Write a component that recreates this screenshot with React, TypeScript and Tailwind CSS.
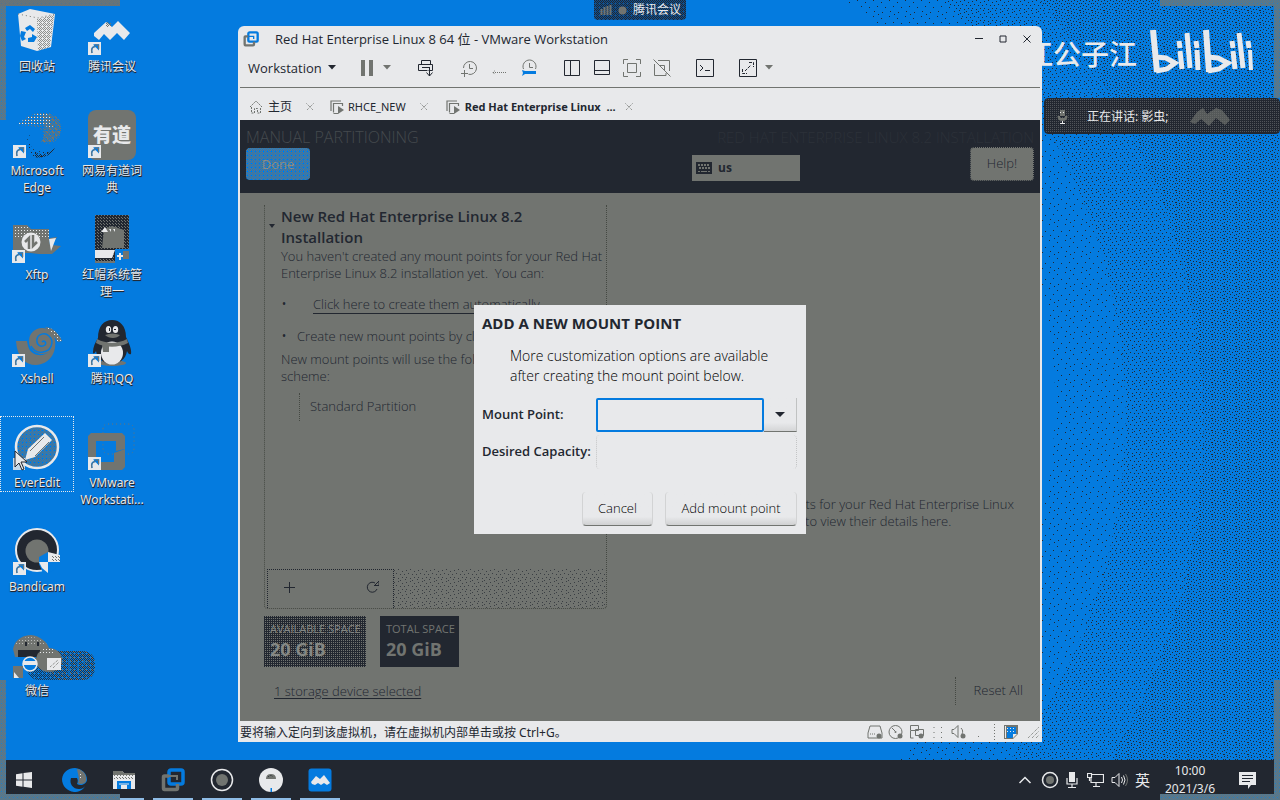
import React from "react";

const DARK = "#222730";
const GRAY = "#717470";
const LIGHT = "#e8e9eb";
const BLUE = "#047bdf";

type SvgProps = { w: number; h: number; children: React.ReactNode; className?: string };

function Svg({ w, h, children, className }: SvgProps) {
  return (
    <svg width={w} height={h} viewBox={`0 0 ${w} ${h}`} fill="none" className={className} aria-hidden="true">
      {children}
    </svg>
  );
}

/* ---------- Dither patterns shared by every drawing ---------- */

function Patterns() {
  return (
    <svg width="0" height="0" className="absolute" aria-hidden="true">
      <defs>
        <pattern id="sparse" width="16" height="16" patternUnits="userSpaceOnUse" shapeRendering="crispEdges">
          <path d="M1 2h1v1h-1zM9 0h1v1h-1zM5 7h1v1h-1zM13 6h1v1h-1zM2 12h1v1h-1zM10 11h1v1h-1zM14 14h1v1h-1z" fill={DARK} />
        </pattern>
        <pattern id="medium" width="12" height="12" patternUnits="userSpaceOnUse" shapeRendering="crispEdges">
          <path d="M0 1h1v1h-1zM4 0h1v1h-1zM8 2h1v1h-1zM2 4h1v1h-1zM6 5h1v1h-1zM10 5h1v1h-1zM0 8h1v1h-1zM4 9h1v1h-1zM8 8h1v1h-1zM11 10h1v1h-1zM6 11h1v1h-1z" fill={DARK} />
        </pattern>
        <pattern id="dense" width="12" height="12" patternUnits="userSpaceOnUse" shapeRendering="crispEdges">
          <path d="M0 0h1v1h-1zM3 1h1v1h-1zM6 0h1v1h-1zM9 1h1v1h-1zM1 3h1v1h-1zM5 3h1v1h-1zM8 4h1v1h-1zM11 3h1v1h-1zM3 5h1v1h-1zM0 6h1v1h-1zM6 6h1v1h-1zM10 7h1v1h-1zM2 8h1v1h-1zM5 9h1v1h-1zM8 9h1v1h-1zM11 10h1v1h-1zM0 10h1v1h-1zM3 11h1v1h-1z" fill={DARK} />
        </pattern>
        <pattern id="checkGray" width="4" height="4" patternUnits="userSpaceOnUse" shapeRendering="crispEdges">
          <path d="M0 0h1v1h-1zM2 0h1v1h-1zM1 1h1v1h-1zM3 1h1v1h-1zM0 2h1v1h-1zM2 2h1v1h-1zM3 3h1v1h-1z" fill={GRAY} />
        </pattern>
        <pattern id="checkDark" width="4" height="4" patternUnits="userSpaceOnUse" shapeRendering="crispEdges">
          <path d="M0 0h1v1h-1zM2 0h1v1h-1zM1 1h1v1h-1zM3 1h1v1h-1zM0 2h1v1h-1zM2 2h1v1h-1zM3 3h1v1h-1z" fill={DARK} />
        </pattern>
        <pattern id="dotsLight" width="3" height="3" patternUnits="userSpaceOnUse" shapeRendering="crispEdges">
          <path d="M0 0h1v1h-1z" fill={LIGHT} />
        </pattern>
        <pattern id="dotsGray" width="3" height="3" patternUnits="userSpaceOnUse" shapeRendering="crispEdges">
          <path d="M1 0h1v1h-1zM0 2h1v1h-1z" fill={GRAY} />
        </pattern>
      </defs>
    </svg>
  );
}

/* Fills its positioned parent with one of the patterns. */
function Dither({ id }: { id: string }) {
  return (
    <svg className="absolute inset-0 h-full w-full" aria-hidden="true">
      <rect width="100%" height="100%" fill={`url(#${id})`} />
    </svg>
  );
}

function Wallpaper() {
  return (
    <svg className="absolute inset-0 h-full w-full" viewBox="0 0 1280 760" preserveAspectRatio="xMaxYMin slice" aria-hidden="true">
      <path d="M845 0A490 490 0 0 1 900 760H1010A570 570 0 0 0 945 0Z" fill="url(#sparse)" />
      <path d="M945 0A570 570 0 0 1 1010 760H1110A640 640 0 0 0 1040 0Z" fill="url(#medium)" />
      <path d="M1040 0A640 640 0 0 1 1110 760H1280V0Z" fill="url(#dense)" />
    </svg>
  );
}

/* ---------- Desktop icons ---------- */

function ShortcutArrow({ y = 34 }: { y?: number }) {
  return (
    <g transform={`translate(0 ${y})`}>
      <rect width="13" height="13" fill={LIGHT} />
      <path d="M4 11c-1-4 0-6 3-6.500V3h3.500v4" stroke={BLUE} strokeWidth="1.500" />
      <path d="M5 2.500h6v6z" fill={BLUE} />
      <path d="M4 11c-1-3 0-6 3-6.500M7 3h3.500v4" stroke={GRAY} />
    </g>
  );
}

const recycle = (
  <Svg w={48} h={48}>
    <path d="M5 7L17 2l25 5-4 33-14 4-16-5z" fill={LIGHT} />
    <path d="M24 12l17-4-4 32-12 4z" fill="url(#checkGray)" opacity=".75" />
    <path d="M5 7l20 4 17-4" stroke={GRAY} strokeDasharray="1 3" />
    <path d="M12 21l5-3 5 4-2 3-3-3-3 2zM8 24l5 1-2 5 2 2-4 2-2-5zM15 31l4-1v-3l5 3-3 5h-6z" fill={BLUE} />
  </Svg>
);

const meeting = (
  <Svg w={48} h={48}>
    <path d="M6 23L18 12l6 5 6-6 12 12-6 7-7-7-7 7-6-6-5 6-5-4z" fill={LIGHT} transform="translate(0 3)" />
    <path d="M18 15h5v5h-5z" fill="url(#checkGray)" />
    <ShortcutArrow y={35} />
  </Svg>
);

const edge = (
  <Svg w={48} h={48}>
    <path d="M4 14C14 3 28-1 39 3c10 5 13 14 7 23-5 7-14 9-18 4 6-7 1-15-12-15z" fill="url(#dotsGray)" />
    <path d="M28 3c14-1 21 6 20 17-3 10-14 14-20 10 5-6 5-15 0-27z" fill="url(#checkGray)" />
    <path d="M4 14C16 3 28 1 36 3l4 14-9-2-15-1z" fill="url(#dotsLight)" />
    <path d="M17 22c-3 10 2 20 12 18 5 0 10-1 13-4-3 8-12 12-20 10-8-4-11-14-5-24z" fill="url(#medium)" />
    <path d="M22 41c7 4 13 2 20-4-3 7-12 11-20 9z" fill="url(#checkDark)" />
    <ShortcutArrow y={34} />
  </Svg>
);

const youdao = (
  <span className="relative -mt-px grid h-[50px] w-12 place-items-center rounded-lg bg-[#717470]">
    <span className="text-[19px] leading-5 font-black text-[#e8e9eb]">有道</span>
    <Svg w={48} h={48} className="absolute inset-0">
      <ShortcutArrow y={35} />
    </Svg>
  </span>
);

const xftp = (
  <Svg w={50} h={50}>
    <path d="M1 10h14l4 4h18v24H1z" fill={GRAY} />
    <path d="M1 10h14l4 4h18v8H1z" fill="url(#dotsLight)" />
    <path d="M38 23l7-1-5 8 9 1-9 8H18l18-2z" fill={GRAY} />
    <path d="M37 24l7-1-5 13z" fill={LIGHT} />
    <circle cx="19" cy="27" r="9.500" fill={LIGHT} />
    <path d="M17 34V23l-4 4M21 20v11l4-4" stroke={GRAY} strokeWidth="2.500" />
    <ShortcutArrow y={35} />
  </Svg>
);

const archive = (
  <Svg w={48} h={52}>
    <path d="M7 0h34v48H7z" fill={DARK} />
    <path d="M7 0h34v48H7z" fill="url(#dotsGray)" />
    <path d="M16 14l8-3 12 4v18H14z" fill={GRAY} />
    <path d="M13 17l4-5 3 5zM21 14h2v3zM25 14h2v3z" fill={LIGHT} />
    <path d="M7 35h20l-3 8H7z" fill={LIGHT} />
    <path d="M7 46h20v2H7z" fill={GRAY} />
    <path d="M27 34h14v14H27z" fill={BLUE} />
    <path d="M35 36h6v8h-6z" fill={GRAY} />
    <path d="M32 38v7M29 41h6" stroke={LIGHT} strokeWidth="2" />
  </Svg>
);

const xshell = (
  <Svg w={50} h={50}>
    <path d="M4 22h11c1 8 4 13 11 14 8 1 14-4 14-10l3-6c2 15-6 25-19 26C13 46 5 38 4 22z" fill={GRAY} />
    <circle cx="30" cy="22" r="13" fill={GRAY} />
    <path d="M30 23c2-2 5 0 3 3-4 3-9 0-8-6 1-5 8-7 12-3 6 6 2 15-6 16-6 1-10-2-12-6" stroke={BLUE} strokeWidth="1.500" />
    <path d="M33 8c8 1 13 5 17 14l-4 1-4-6z" fill={GRAY} />
    <path d="M33 8c8 1 13 5 17 14l-4 1-4-6z" fill="url(#dotsLight)" />
    <ShortcutArrow y={35} />
  </Svg>
);

const qq = (
  <Svg w={48} h={48}>
    <ellipse cx="24" cy="44" rx="14" ry="3" fill={GRAY} />
    <path d="M10 19C10 7 16 1 24 1s14 6 14 17c3 6 6 13 5 17-2 1-3-1-4-3-1 8-8 13-15 13S9 40 8 32c-1 2-3 4-3 1 0-5 2-9 5-14z" fill={DARK} />
    <ellipse cx="24" cy="34" rx="11" ry="11.500" fill={LIGHT} />
    <ellipse cx="20.500" cy="10.500" rx="2.700" ry="3.600" fill={LIGHT} />
    <ellipse cx="27.500" cy="10.500" rx="2.700" ry="3.600" fill={LIGHT} />
    <path d="M21 9h1v3h-1zM26 10h2v1h-2z" fill={DARK} />
    <path d="M17 16c5-2 10-2 15 0-3 4-11 4-15 0z" fill={GRAY} />
    <path d="M9 20c9 5 21 5 30 0l1 4c-10 5-22 5-32 0z" fill={GRAY} />
    <path d="M14 25h7v8h-6z" fill={GRAY} />
    <ShortcutArrow y={35} />
  </Svg>
);

const everedit = (
  <Svg w={48} h={48}>
    <circle cx="24" cy="24" r="21" fill={BLUE} />
    <circle cx="24" cy="24" r="21" fill="url(#checkGray)" stroke={LIGHT} strokeWidth="2.500" />
    <path d="M12 37l3-11 17-16 7 7-17 17z" fill={LIGHT} />
    <path d="M17 28l14-14M22 33l14-14" stroke={GRAY} />
    <path d="M0 35h12v12H0z" fill={LIGHT} opacity=".85" />
  </Svg>
);

const vmware = (
  <Svg w={48} h={48}>
    <path d="M15 6q0-5 5-5h20q6 0 6 6v18q0 6-6 6H21q-6 0-6-6z" stroke={GRAY} strokeDasharray="1 3" />
    <path fillRule="evenodd" d="M3 10h31l3 3v13l-9 2V18H8v21h18v-9l11-4v18l-3 3H0V13z" fill={GRAY} />
    <ShortcutArrow y={34} />
  </Svg>
);

const bandicam = (
  <Svg w={48} h={48}>
    <circle cx="24" cy="23" r="21" fill={DARK} stroke={LIGHT} strokeWidth="2" />
    <circle cx="24" cy="24" r="11.500" fill={GRAY} />
    <path d="M26 30l9-5v21h-5l-4-9z" fill={BLUE} />
    <path d="M35 25l12 3v7H35zM26 35h9v11l-6-5z" fill={LIGHT} />
    <path d="M35 35h11c-1 5-6 9-11 11z" fill={BLUE} />
    <path d="M38 28h9v6h-9z" fill="url(#dotsGray)" />
    <ShortcutArrow y={35} />
  </Svg>
);

const wechat = (
  <Svg w={84} h={50}>
    <g transform="translate(0 3)">
      <rect x="34" y="17" width="48" height="29" rx="12" fill="url(#dotsGray)" />
      <rect x="14" y="17" width="68" height="29" rx="12" fill="url(#checkDark)" opacity=".85" />
      <path d="M0 15C2 4 12 1 18 1c9 1 16 7 18 13l-5 9H2z" fill={GRAY} />
      <path d="M1 10C8 1 27 0 35 12z" fill="url(#dotsLight)" opacity=".6" />
      <path d="M12 8h2v4h-2zM24 8h2v4h-2z" fill={DARK} />
      <path d="M5 16h22v7H5z" fill={DARK} />
      <ellipse cx="36" cy="26" rx="13" ry="12" fill={GRAY} />
      <path d="M29 14h12v6H26z" fill="url(#dotsLight)" />
      <circle cx="17" cy="30" r="7" fill={BLUE} stroke={LIGHT} strokeWidth="1.500" />
      <path d="M10 27h14v4H10z" fill={LIGHT} />
      <path d="M0 32h10v12H0z" fill={GRAY} />
      <path d="M34 24h14v12H34z" fill={LIGHT} />
      <path d="M37 33l8-7M40 34l6-6" stroke={GRAY} strokeDasharray="1 1" />
      <path d="M56 22v20M65 27v12M71 26v4" stroke={BLUE} />
      <path d="M1 38l5 6H1z" fill={LIGHT} />
    </g>
  </Svg>
);

type Shortcut = { label: string; art: React.ReactNode; selected?: boolean; wide?: boolean };

const shortcuts: Shortcut[] = [
  { label: "回收站", art: recycle },
  { label: "Microsoft Edge", art: edge },
  { label: "Xftp", art: xftp },
  { label: "Xshell", art: xshell },
  { label: "EverEdit", art: everedit, selected: true },
  { label: "Bandicam", art: bandicam },
  { label: "微信", art: wechat, wide: true },
  { label: "腾讯会议", art: meeting },
  { label: "网易有道词典", art: youdao },
  { label: "红帽系统管理一", art: archive },
  { label: "腾讯QQ", art: qq },
  { label: "VMware Workstati...", art: vmware },
];

function DesktopIcon({ item }: { item: Shortcut }) {
  return (
    <button
      className={
        item.selected
          ? "flex h-[76px] w-[74px] flex-col items-center pt-[7px] outline-1 -outline-offset-1 outline-dotted outline-[#e8e9eb]"
          : "flex w-[74px] flex-col items-center pt-[7px]"
      }
    >
      <span className={item.wide ? "flex h-[51px] w-12 justify-start overflow-visible" : "flex h-[51px] w-12 justify-center"}>
        <span className="shrink-0">{item.art}</span>
      </span>
      <span className="w-[66px] text-center text-[12px] leading-[17px] text-[#e8e9eb] [text-shadow:1px_1px_0_#222730,0_1px_1px_#222730]">
        {item.label}
      </span>
    </button>
  );
}

/* ---------- VMware window ---------- */

function VmLogo({ size, dark }: { size: number; dark?: boolean }) {
  return (
    <svg width={size} height={size} viewBox="0 0 24 24" fill="none" aria-hidden="true">
      <rect x="8" y="2" width="14" height="14" rx="2" stroke={BLUE} strokeWidth="3.500" />
      <path d="M8 8H3.500q-1 0-1 1v11q0 1.500 1 1.500H15q1.500 0 1.500-1.500v-4" stroke={GRAY} strokeWidth="3.500" />
      <path d="M8 8h8v4" stroke={dark ? GRAY : BLUE} strokeWidth="2" />
    </svg>
  );
}

const tool = "grid h-6 w-6 place-items-center";

function Caret({ color }: { color: string }) {
  return (
    <Svg w={8} h={5}>
      <path d="M0 0h8L4 4.500z" fill={color} />
    </Svg>
  );
}

function Toolbar() {
  return (
    <div className="flex h-[35px] items-center pb-1 pl-2.5">
      <button className="flex w-[88px] items-center justify-between text-[13px] leading-5">
        Workstation <Caret color={DARK} />
      </button>
      <div className="ml-[19px] flex items-center">
        <button className={tool} aria-label="Pause">
          <Svg w={12} h={16}><path d="M0 0h4v16H0zM8 0h4v16H8z" fill={GRAY} /></Svg>
        </button>
        <button className="grid h-6 w-4 place-items-center" aria-label="Power options"><Caret color={GRAY} /></button>
      </div>
      <button className="ml-[19px] grid h-6 w-6 place-items-center" aria-label="Send keys">
        <Svg w={18} h={18}>
          <path d="M4.500 5V1.500h9V5M1.500 5.500h14v6h-4M1.500 5.500v6h9M5 8.500h8M12.500 9v8M9.500 13.500l3 3.500 3-3.500" stroke={DARK} />
        </Svg>
      </button>
      <div className="ml-[19px] flex items-center gap-1.5">
        <button className={tool} aria-label="Take snapshot">
          <Svg w={18} h={18}>
            <path d="M3.500 9a6.500 6.500 0 1 1 5 6.300M9.500 5v4.500H13M4.500 11v7M1 14.500h7" stroke={GRAY} />
          </Svg>
        </button>
        <button className={tool} aria-label="Revert snapshot">
          <Svg w={16} h={18}>
            <path d="M2 13.500h14" stroke={GRAY} strokeDasharray="1 1" />
            <path d="M4 11.500l-2 2 2 2" stroke={GRAY} strokeDasharray="1 1" />
          </Svg>
        </button>
        <button className={tool} aria-label="Manage snapshots">
          <Svg w={18} h={18}>
            <path d="M3.500 10a6.500 6.500 0 1 1 12 0M9.500 4v4.500H13" stroke={GRAY} />
            <path d="M2 11l3 1h11v3H5l-3 2 1-3z" fill={BLUE} />
          </Svg>
        </button>
      </div>
      <div className="ml-[19px] flex items-center gap-1.5">
        <button className={tool} aria-label="Library">
          <Svg w={16} h={16}><path d="M.5.5h15v15H.5zM6.500 1v14" stroke={DARK} /></Svg>
        </button>
        <button className={tool} aria-label="Thumbnail bar">
          <Svg w={16} h={16}><path d="M.5.5h15v14H.5zM1 10.500h14" stroke={DARK} /></Svg>
        </button>
        <button className={tool} aria-label="Full screen">
          <Svg w={18} h={18}>
            <path d="M.5 5V.5H5M13 .5h4.500V5M17.500 13v4.500H13M5 17.500H.5V13M4.500 4.500h9v9h-9z" stroke={GRAY} />
          </Svg>
        </button>
        <button className={tool} aria-label="Unity">
          <Svg w={18} h={18}>
            <path d="M5 1.500h11.500V12M6.500 6.500h5V12M1.500 5v11.500H13V14M.5.500l17 17" stroke={GRAY} />
          </Svg>
        </button>
      </div>
      <button className="ml-[19px] grid h-6 w-6 place-items-center" aria-label="Console view">
        <Svg w={18} h={18}><path d="M.5.5h17v17H.5zM4 6l3 3-3 3M9 11.500h5" stroke={DARK} /></Svg>
      </button>
      <div className="ml-[19px] flex items-center gap-px">
        <button className={tool} aria-label="Stretch guest">
          <Svg w={18} h={18}>
            <path d="M.5.5h17v17H.5z" stroke={DARK} />
            <path d="M10 3.500h4.500V8M3.500 10v4.500H8M6 12l6-6" stroke={DARK} strokeDasharray="3 1" />
          </Svg>
        </button>
        <button className="grid h-6 w-4 place-items-center" aria-label="Stretch options"><Caret color={GRAY} /></button>
      </div>
    </div>
  );
}

function CloseMark() {
  return (
    <button aria-label="Close tab" className="grid h-4 w-4 place-items-center">
      <Svg w={8} h={8}><path d="M.5.5l7 7M7.500.5l-7 7" stroke={GRAY} strokeDasharray="1 1" /></Svg>
    </button>
  );
}

function VmTabIcon() {
  return (
    <Svg w={14} h={14}>
      <path d="M1 11V1h10M3.500 12.500v-9h9V6M3.500 13.500H8" stroke={GRAY} strokeWidth="1.200" />
      <path d="M8 6l6 4-6 4z" fill={GRAY} />
    </Svg>
  );
}

function Tabs() {
  return (
    <div className="flex h-[33px] items-center border-t border-[#717470] pt-1.5 pl-2.5 font-['Noto_Sans','Noto_Sans_CJK_SC',sans-serif] text-[11px] leading-4">
      <div className="flex items-center gap-1.5">
        <Svg w={12} h={14}>
          <path d="M0 7l6-6 6 6M1.500 7v6h3V8.500h3V13h3V7" stroke={GRAY} strokeDasharray="2 1" />
        </Svg>
        <span className="text-[12px]">主页</span>
        <span className="ml-1"><CloseMark /></span>
      </div>
      <div className="ml-3 flex items-center gap-1">
        <VmTabIcon />
        <span>RHCE_NEW</span>
        <span className="ml-1.5"><CloseMark /></span>
      </div>
      <div className="ml-3.5 flex items-center gap-[5px]">
        <VmTabIcon />
        <span className="font-bold whitespace-pre">Red Hat Enterprise Linux  ...</span>
        <CloseMark />
      </div>
    </div>
  );
}

function InstallerHeader() {
  return (
    <header className="flex h-[73px] shrink-0 justify-between bg-[#222730] pt-2 pr-1.5 pl-1.5">
      <div>
        <h1 className="text-[16px] leading-[18px] font-light text-[#454a4e]">MANUAL PARTITIONING</h1>
        <button className="relative mt-0.5 h-8 w-16 overflow-hidden rounded-sm bg-[#047bdf] text-[13px] leading-[30px] text-[#8a8d89]">
          <Dither id="checkGray" />
          <span className="relative">Done</span>
        </button>
      </div>
      <div className="w-[342px]">
        <p className="text-right text-[15px] leading-[18px] font-light whitespace-nowrap text-[#2c3139]">RED HAT ENTERPRISE LINUX 8.2 INSTALLATION</p>
        <div className="flex justify-between">
          <button className="mt-[9px] flex h-[26px] w-[108px] items-center gap-1.5 bg-[#717470] pl-1 text-[12px] leading-4 font-bold text-[#222730]">
            <Svg w={16} h={12}>
              <path d="M0 0h16v12H0z" fill={DARK} />
              <path d="M2 3h12M3 6h11" stroke={GRAY} strokeWidth="2" strokeDasharray="2 1" />
              <path d="M2 9.500h2M5 9.500h6M12 9.500h2" stroke={GRAY} />
            </Svg>
            us
          </button>
          <button className="mt-px h-[34px] w-16 rounded-sm border border-dotted border-[#222730] bg-[#717470] text-[13px] font-light text-[#222730]">
            Help!
          </button>
        </div>
      </div>
    </header>
  );
}

function PartitionPanel() {
  return (
    <section className="flex min-h-0 w-[343px] flex-1 flex-col rounded-b border border-t-0 border-dotted border-[#454943]">
      <div className="flex-1 pt-px pl-4">
        <h2 className="-ml-3 flex gap-1.5 text-[15px] leading-[21px] font-semibold text-[#222730]">
          <Svg w={6} h={24}><path d="M0 18h6l-3 4z" fill={DARK} /></Svg>
          <span className="w-64">New Red Hat Enterprise Linux 8.2 Installation</span>
        </h2>
        <p className="text-[13px] leading-[17px]">
          You haven't created any mount points for your Red Hat Enterprise Linux 8.2 installation yet.&nbsp; You can:
        </p>
        <ul className="mt-3.5 text-[13px] leading-[17px]">
          <li className="flex items-center">
            <span className="mr-6 w-2 text-[16px]">•</span>
            <a href="#auto" className="underline underline-offset-4">Click here to create them automatically.</a>
          </li>
          <li className="mt-[15px] flex items-center">
            <span className="mr-2 w-2 text-[16px]">•</span>
            <span className="whitespace-nowrap">Create new mount points by clicking the '+' button.</span>
          </li>
        </ul>
        <p className="mt-1.5 text-[13px] leading-[17px]">New mount points will use the following partitioning scheme:</p>
        <button className="mt-2 ml-[18px] flex h-7 items-center border-l border-dotted border-[#454943] pl-2.5 text-[13px]">
          Standard Partition
        </button>
      </div>
      <div className="flex h-[39px] items-stretch">
        <div className="ml-0.5 flex w-[127px] shrink-0 items-center justify-between border border-b-0 border-dotted border-[#222730] px-4 pb-1">
          <button aria-label="Add mount point to list">
            <Svg w={11} h={11}><path d="M5.500 0v11M0 5.500h11" stroke={DARK} /></Svg>
          </button>
          <button aria-label="Reload" className="-mr-0.5">
            <Svg w={13} h={13}>
              <path d="M9 2A5 5 0 1 0 11 8M8 5l5-5M8 4.500h5V1" stroke={DARK} />
            </Svg>
          </button>
        </div>
        <svg className="h-full min-w-0 flex-1" aria-hidden="true">
          <rect width="100%" height="100%" fill="url(#medium)" opacity=".7" />
        </svg>
      </div>
    </section>
  );
}

function MountDialog() {
  return (
    <div role="dialog" aria-labelledby="dlg-title" className="w-[332px] bg-[#e8e9eb] pt-2 pr-[9px] pb-2 pl-2 text-[#222730]">
      <h2 id="dlg-title" className="text-[15px] leading-[21px] font-bold">ADD A NEW MOUNT POINT</h2>
      <p className="mt-3 pl-7 text-[14px] leading-5 font-light text-black">
        More customization options are available after creating the mount point below.
      </p>
      <form className="mt-3" onSubmit={(e) => e.preventDefault()}>
        <div className="flex items-center">
          <label htmlFor="mount" className="w-[114px] text-[13px] font-semibold">Mount Point:</label>
          <input id="mount" className="h-[34px] min-w-0 flex-1 rounded-xs border-2 border-[#047bdf] bg-transparent px-2 text-[14px] outline-none" />
          <button type="button" aria-label="Mount point choices" className="grid h-[34px] w-[33px] place-items-center border-r border-b border-r-[#c0c2c2] border-b-[#717470] bg-linear-to-b from-[#e8e9eb] from-75% to-[#d4d5d6]">
            <svg width="10" height="5" viewBox="0 0 10 5" aria-hidden="true"><path d="M0 0h10L5 5z" fill={DARK} /></svg>
          </button>
        </div>
        <div className="mt-[3px] flex items-center">
          <label htmlFor="capacity" className="w-[114px] text-[13px] font-semibold whitespace-nowrap">Desired Capacity:</label>
          <input id="capacity" className="h-[34px] min-w-0 flex-1 rounded-sm border-x border-dotted border-[#c4c5c6] bg-transparent px-2 text-[14px] outline-none" />
        </div>
        <div className="mt-[23px] flex justify-end gap-3 text-[13px] font-light text-black">
          <button type="button" className="h-[34px] w-[71px] rounded-sm border-x border-b border-x-[#d2d3d4] border-b-[#717470] bg-linear-to-b from-[#e8e9eb] from-75% to-[#d0d1d2]">
            Cancel
          </button>
          <button type="submit" className="h-[34px] w-[132px] rounded-sm border-x border-b border-x-[#d2d3d4] border-b-[#717470] bg-linear-to-b from-[#e8e9eb] from-75% to-[#d0d1d2]">
            Add mount point
          </button>
        </div>
      </form>
    </div>
  );
}

function GuestScreen() {
  return (
    <div className="relative flex min-h-0 flex-1 flex-col bg-[#717470] text-[#222730]">
      <InstallerHeader />
      <div className="flex min-h-0 flex-1 pt-3 pr-4 pl-6 font-light">
        <div className="flex w-[343px] shrink-0 flex-col pb-[21px]">
          <PartitionPanel />
          <div className="mt-[7px] flex gap-3.5 font-normal text-[#717470]">
            <div className="h-[51px] w-[102px] bg-[conic-gradient(#717470_25%,#222730_0)] bg-[length:2px_2px] px-1.5 pt-1">
              <p className="text-[11px] leading-[18px] whitespace-nowrap text-[#858884]">AVAILABLE SPACE</p>
              <p className="text-[18px] leading-[22px] font-bold text-[#858884]">20 GiB</p>
            </div>
            <div className="h-[51px] w-[79px] bg-[#222730] px-1.5 pt-1">
              <p className="text-[11px] leading-[18px] whitespace-nowrap">TOTAL SPACE</p>
              <p className="text-[18px] leading-[22px] font-bold">20 GiB</p>
            </div>
          </div>
          <a href="#storage" className="mt-[15px] ml-2.5 self-start text-[13px] leading-[18px] text-[#222730] underline underline-offset-2">
            1 storage device selected
          </a>
        </div>
        <div className="flex min-w-0 flex-1 flex-col items-end justify-end pb-4">
          <p className="mb-[147px] w-[389px] text-[13px] leading-[17px]">
            When you create mount points for your Red Hat Enterprise Linux 8.2 installation, you'll be able to view their details here.
          </p>
          <button className="h-7 border-l border-dotted border-[#454943] pr-px pl-[18px] text-[13px]">Reset All</button>
        </div>
      </div>
      <div className="absolute inset-0 grid place-items-center pb-0.5">
        <MountDialog />
      </div>
    </div>
  );
}

function StatusBar() {
  return (
    <footer className="flex h-[21px] shrink-0 items-center justify-between font-['Noto_Sans','Noto_Sans_CJK_SC',sans-serif] text-[12px] leading-4">
      <span className="pt-0.5 whitespace-nowrap">要将输入定向到该虚拟机，请在虚拟机内部单击或按 Ctrl+G。</span>
      <div className="flex items-center gap-[5px] pr-px">
        <Svg w={16} h={14}><path d="M1 8l2-7h10l2 7v5H1z" stroke={GRAY} /><path d="M3 9h6" stroke={GRAY} strokeDasharray="1 1" /><circle cx="12" cy="11" r="2.500" fill={GRAY} /></Svg>
        <Svg w={16} h={14}><circle cx="7.500" cy="7" r="6.500" stroke={GRAY} /><circle cx="7.500" cy="7" r="1" fill={GRAY} /><path d="M4 3l3 3" stroke={GRAY} /><circle cx="12" cy="11" r="2.500" fill={GRAY} /></Svg>
        <Svg w={16} h={14}><path d="M1.500.5h8v5h-8zM6.500 4.500h8v6h-8zM1.500 6v7h3" stroke={GRAY} /><circle cx="12" cy="11" r="2.500" fill={GRAY} /></Svg>
        <Svg w={16} h={14}><path d="M4 2v12M11.500 2v12" stroke={GRAY} strokeDasharray="1 4" /></Svg>
        <Svg w={16} h={14}><path d="M1 4.500h2l4-4v12l-4-4H1zM10 3c2 2 2 4 1 6" stroke={GRAY} /><circle cx="12" cy="11" r="2.500" fill={GRAY} /></Svg>
        <Svg w={16} h={14}><path d="M6 11h1v1H6z" fill={GRAY} /></Svg>
        <Svg w={4} h={16}><path d="M1.500 0v16" stroke={GRAY} strokeDasharray="1 2" /></Svg>
        <span className="ml-0.5">
          <Svg w={14} h={14}><path d="M0 0h14v9l-5 5H0z" fill={GRAY} /><path d="M3 2h9v7l-4 4H3z" fill={BLUE} /><path d="M3 2h9v7H3z" fill="url(#dotsLight)" /><path d="M1.500 1v12" stroke={LIGHT} /><path d="M9 13V9h4z" fill={LIGHT} /></Svg>
        </span>
        <span className="ml-1">
          <Svg w={12} h={12}><path d="M1 12L12 1M5 12l7-7M9 12l3-3" stroke={GRAY} strokeDasharray="1 1" /></Svg>
        </span>
      </div>
    </footer>
  );
}

function VmWindow() {
  return (
    <section className="absolute top-[26px] right-[238px] bottom-[18px] left-[238px] flex min-w-[780px] flex-col rounded-t-md bg-[#e8e9eb] pr-0.5 pl-0.5 font-['Open_Sans','Noto_Sans_CJK_SC',sans-serif] text-[#222730]">
      <div className="flex h-[26px] shrink-0 items-center pr-[9px] pl-[3px]">
        <VmLogo size={16} />
        <h1 className="ml-4 flex-1 text-[13px] leading-5">Red Hat Enterprise Linux 8 64 位 - VMware Workstation</h1>
        <div className="flex items-center gap-4">
          <button aria-label="Minimize"><Svg w={8} h={8}><path d="M0 3.500h8" stroke={DARK} /></Svg></button>
          <button aria-label="Maximize" className="grid place-items-center">
            <Svg w={8} h={8}><path d="M1 1h6v6H1z" stroke={DARK} /></Svg>
          </button>
          <button aria-label="Close"><Svg w={8} h={8}><path d="M.5.5l7 7M7.500.5l-7 7" stroke={DARK} /></Svg></button>
        </div>
      </div>
      <div className="-ml-0.5 shrink-0"><Toolbar /></div>
      <div className="shrink-0"><Tabs /></div>
      <GuestScreen />
      <StatusBar />
    </section>
  );
}

/* ---------- Overlays of the meeting and the stream ---------- */

function MeetingTab() {
  return (
    <div className="absolute top-0 left-[594px] h-5 w-[92px] overflow-hidden rounded-b bg-[#0d4f90] text-[12px] leading-4 text-[#e8e9eb]">
      <Dither id="checkDark" />
      <div className="relative flex h-full items-center gap-1.5 pl-1.5">
        <Svg w={12} h={10}><path d="M1.500 4v6M4.500 2v8M7.500 1v9M10.500 0v10" stroke={GRAY} strokeWidth="2" /></Svg>
        <Svg w={9} h={9}><circle cx="4.500" cy="4.500" r="4" fill={GRAY} /></Svg>
        <span className="whitespace-nowrap">腾讯会议</span>
      </div>
    </div>
  );
}

function Watermark() {
  return (
    <div className="absolute top-6 right-[25px] flex items-center gap-3 text-[#e8e9eb]">
      <span className="pt-1 text-[28px] leading-[52px] font-medium whitespace-nowrap">江公子江</span>
      <svg width="106" height="50" viewBox="0 0 106 50" fill="none" stroke={LIGHT} strokeWidth="6" role="img" aria-label="bilibili">
        <line x1="4" y1="3" x2="8" y2="45" />
        <polyline points="7,30 17,31 26,36 18,42 7,44" strokeWidth="5" />
        <line x1="31" y1="24" x2="33" y2="42" strokeWidth="5" />
        <line x1="30" y1="14" x2="31" y2="21" strokeWidth="5" />
        <line x1="38" y1="6" x2="41" y2="41" strokeWidth="5" />
        <line x1="48" y1="23" x2="49" y2="43" strokeWidth="5" />
        <line x1="47" y1="14" x2="48" y2="21" strokeWidth="5" />
        <line x1="57" y1="3" x2="60" y2="45" />
        <polyline points="59,30 69,31 79,36 70,42 59,44" strokeWidth="5" />
        <line x1="84" y1="24" x2="86" y2="42" strokeWidth="5" />
        <line x1="83" y1="14" x2="84" y2="21" strokeWidth="5" />
        <line x1="90" y1="6" x2="94" y2="41" strokeWidth="5" />
        <line x1="101" y1="23" x2="102" y2="43" strokeWidth="4" />
        <line x1="99" y1="14" x2="100" y2="21" strokeWidth="5" />
      </svg>
    </div>
  );
}

function SpeakerBar() {
  return (
    <div className="absolute top-[98px] right-0 flex h-9 w-[236px] items-center rounded border border-[#222730] bg-[conic-gradient(#50545a_25%,#222730_0)] bg-[length:2px_2px] pt-0.5 pl-3 text-[12px] leading-4 text-[#e8e9eb]">
      <Svg w={11} h={16}>
        <path d="M3 1h5v8H3zM.5 7q0 5 5 5t5-5" fill={GRAY} />
        <path d="M3 2h5v4H3z" fill="url(#dotsLight)" />
        <path d="M5 12h1v2h2v1H3v-1h2z" fill={LIGHT} />
      </Svg>
      <span className="ml-[19px] whitespace-nowrap">正在讲话: 影虫;</span>
      <Svg w={42} h={20} className="ml-5">
        <path d="M1 15L8 5l6-4 4 6 9-6 6 2 8 10-5 5-9-7-7 8-8-7-6 5z" fill={GRAY} opacity=".65" />
      </Svg>
    </div>
  );
}

function Strip({ className }: { className: string }) {
  return (
    <div className={className}>
      <Dither id="checkGray" />
    </div>
  );
}

function CornerFrame() {
  return (
    <div className="pointer-events-none absolute inset-0 flex flex-col justify-between" aria-hidden="true">
      <div className="flex justify-between">
        <div className="h-[120px] w-[120px]">
          <Strip className="relative h-1.5 bg-[#5c7383]" />
          <Strip className="relative h-[114px] w-1.5 bg-[#3f7ba6]" />
        </div>
        <div className="flex h-[98px] w-[120px] flex-col items-end">
          <Strip className="relative h-1.5 w-full bg-[#3f7ba6]" />
          <Strip className="relative w-1.5 flex-1 bg-[#3f7ba6]" />
        </div>
      </div>
      <div className="flex justify-between">
        <div className="h-[120px] w-[120px]">
          <Strip className="relative h-[114px] w-1.5 bg-[#3f7ba6]" />
          <Strip className="relative h-1.5 bg-[#3f7ba6]" />
        </div>
        <div className="flex h-[120px] w-[120px] flex-col items-end">
          <Strip className="relative w-1.5 flex-1 bg-[#3f7ba6]" />
          <Strip className="relative h-1.5 w-full bg-[#3f7ba6]" />
        </div>
      </div>
    </div>
  );
}

/* ---------- Taskbar ---------- */

const apps: { name: string; art: React.ReactNode; open: boolean }[] = [
  {
    name: "Edge",
    open: false,
    art: (
      <Svg w={25} h={24}>
        <path d="M0 11C1 4 6 0 13 0c7 1 12 5 12 12-1 5-7 6-10 4 1-2 1-4 0-6H9c-2 6 2 11 8 11 3 0 5-1 6-3-2 4-6 6-11 6C5 23 0 18 0 11z" fill={BLUE} />
        <path d="M15 1c6 1 10 5 9 12-1 3-6 4-8 2 2-4 0-8-1-14z" fill={GRAY} />
        <path d="M17 2l4 6-4 4z" fill="url(#dotsLight)" />
      </Svg>
    ),
  },
  {
    name: "File Explorer",
    open: true,
    art: (
      <Svg w={22} h={22}>
        <path d="M0 2h9l2 2h11v16H0z" fill={LIGHT} />
        <path d="M0 2h9l2 2h11v2H0z" fill={GRAY} />
        <path d="M1 6h20v5H1z" fill="url(#dotsGray)" />
        <path d="M4 20v-8h14v8h-4v-4H8v4z" fill={BLUE} />
        <path d="M6 15h10" stroke={LIGHT} />
      </Svg>
    ),
  },
  { name: "VMware Workstation", open: true, art: <VmLogo size={24} dark /> },
  {
    name: "Recorder",
    open: true,
    art: <Svg w={24} h={24}><circle cx="12" cy="12" r="10.500" stroke={LIGHT} strokeWidth="1.500" /><circle cx="12" cy="12" r="6" fill={GRAY} /></Svg>,
  },
  {
    name: "Assistant",
    open: true,
    art: (
      <Svg w={24} h={24}>
        <circle cx="12" cy="12" r="12" fill={LIGHT} />
        <path d="M7 11q0-5 5-5t5 5z" fill={GRAY} />
        <path d="M9 9q3-3 5 0" stroke={DARK} strokeDasharray="1 1" />
        <path d="M11.500 20h1.500v4h-1.500z" fill={BLUE} />
      </Svg>
    ),
  },
  {
    name: "腾讯会议",
    open: true,
    art: (
      <Svg w={24} h={24}>
        <rect x=".5" y=".5" width="23" height="23" rx="3" fill={BLUE} />
        <path d="M3 14l5-6 4 3 4-4 6 8-3 2-3-2-3 2-3-2-3 2-3-1z" fill={LIGHT} />
      </Svg>
    ),
  },
];

function Taskbar() {
  return (
    <nav className="flex h-10 shrink-0 items-stretch justify-between bg-[#222730] text-[#e8e9eb]">
      <div className="flex">
        <button aria-label="Start" className="grid w-12 place-items-center">
          <Svg w={16} h={16}><path d="M0 2.200l6.500-1v6.300H0zM7.500 1L16 0v7.500H7.500zM0 8.500h6.500v6.300l-6.500-1zM7.500 8.500H16V16l-8.500-1.200z" fill={LIGHT} /></Svg>
        </button>
        <div className="ml-0.5 flex items-stretch">
          {apps.map((app) => (
            <button key={app.name} aria-label={app.name} className="flex w-[49px] flex-col items-center">
              <span className="grid flex-1 place-items-center pt-0.5">{app.art}</span>
              <span className={app.open ? "h-0.5 w-10 bg-[#8fbce6]" : "h-0.5 w-10"} />
            </button>
          ))}
        </div>
      </div>
      <div className="flex items-center gap-[7px] pr-6">
        <button aria-label="Hidden icons" className="mr-0.5"><Svg w={14} h={14}><path d="M1.500 10L7 4.500l5.500 5.500" stroke={LIGHT} strokeWidth="1.500" /></Svg></button>
        <Svg w={18} h={18}><circle cx="9" cy="9" r="7.500" stroke={LIGHT} strokeWidth="1.500" /><circle cx="9" cy="9" r="4" fill={GRAY} /></Svg>
        <Svg w={14} h={16}><path d="M3 0h6v10H3z" fill={LIGHT} /><path d="M1 6v6h10V6M6 12v4M2 15.500h8" stroke={LIGHT} strokeWidth="1.200" /></Svg>
        <Svg w={17} h={16}><path d="M5 2.500h11.500v8H4V6M9 11v3M6 14.500h7M.5 1.500h4v4h-4zM2.500 5.500V9" stroke={LIGHT} strokeWidth="1.200" /></Svg>
        <Svg w={17} h={16}><path d="M1 5.500h3l4-4v13l-4-4H1zM10.500 5q2 3 0 6M12.500 3.500q3 4.500 0 9" stroke={LIGHT} /><path d="M14.500 2q4 6 0 12" stroke={GRAY} /></Svg>
        <span className="text-[15px] leading-5">英</span>
        <div className="ml-[5px] w-14 text-center text-[12px] leading-[18px]">
          <div>10:00</div>
          <div>2021/3/6</div>
        </div>
        <button aria-label="Notifications" className="ml-3.5">
          <Svg w={17} h={17}><path d="M0 0h17v13h-5l-3 4v-4H0z" fill={LIGHT} /><path d="M3 3.500h11M3 6.500h11M3 9.500h8" stroke={DARK} /></Svg>
        </button>
      </div>
    </nav>
  );
}

export default function App() {
  return (
    <div className="relative flex min-h-screen flex-col overflow-hidden bg-[#047bdf] font-['Noto_Sans','Noto_Sans_CJK_SC',sans-serif]">
      <Patterns />
      <main className="relative flex min-h-[760px] flex-1 flex-col">
        <Wallpaper />
        <div className="relative grid w-[150px] auto-cols-[75px] grid-flow-col grid-rows-[repeat(7,104px)]">
          {shortcuts.map((item) => <DesktopIcon key={item.label} item={item} />)}
        </div>
        <MeetingTab />
        <Watermark />
        <VmWindow />
        <SpeakerBar />
        <svg width="14" height="21" viewBox="0 0 14 21" className="absolute top-[450px] left-[14px]" aria-hidden="true">
          <path d="M1 1v16l4-4 3 7 2-1-3-7h6z" fill={LIGHT} stroke={DARK} />
        </svg>
      </main>
      <Taskbar />
      <CornerFrame />
    </div>
  );
}
